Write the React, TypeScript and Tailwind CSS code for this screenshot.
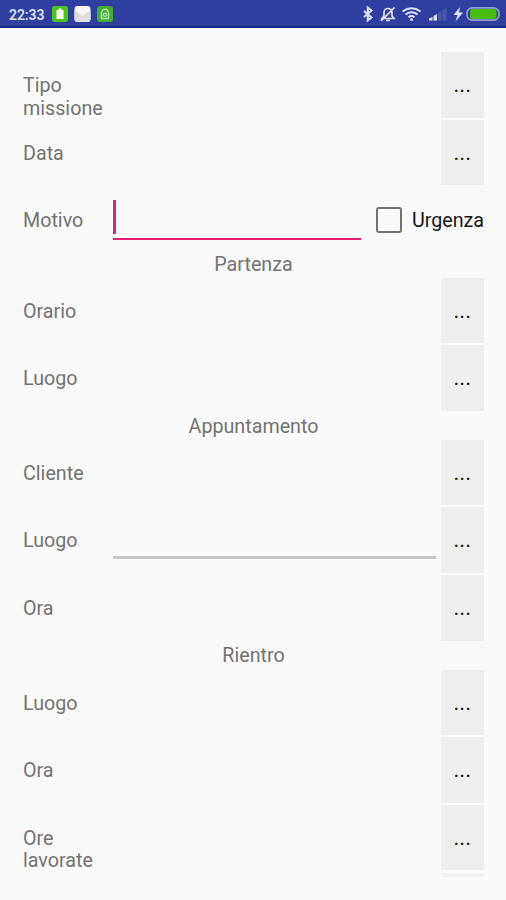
import { useState } from 'react'

interface FieldRow {
  label: string
  editable?: boolean
}

const tripRows: FieldRow[] = [{ label: 'Tipo missione' }, { label: 'Data' }]
const departureRows: FieldRow[] = [{ label: 'Orario' }, { label: 'Luogo' }]
const appointmentRows: FieldRow[] = [{ label: 'Cliente' }, { label: 'Luogo', editable: true }, { label: 'Ora' }]
const returnRows: FieldRow[] = [{ label: 'Luogo' }, { label: 'Ora' }, { label: 'Ore lavorate' }]

function StatusBar() {
  return (
    <header className="flex h-[28px] items-center justify-between border-b-2 border-[#1c2a8c] bg-[#303f9f] pl-[9px] pr-[6px] pt-[2px] text-[#dfe3fa]">
      <div className="flex items-center">
        <span className="w-[43px] pt-px text-[14px] font-semibold leading-none tracking-[-0.1px]">22:33</span>
        <svg width="62" height="18" viewBox="0 0 62 18">
          <rect x="0" y="1" width="16" height="16" rx="3" fill="#4cc417" />
          <path d="M4.500 5h2V3.500h3V5h2v9h-7z" fill="#fff" />
          <rect x="22.500" y="1" width="16" height="16" rx="3" fill="#f6f6f6" />
          <path d="M22.500 5l8 6 8-6v9a3 3 0 0 1-3 3h-10a3 3 0 0 1-3-3z" fill="#e0e0e0" />
          <rect x="45" y="1" width="16" height="16" rx="3" fill="#42ad32" />
          <path d="M51 4.500h4l1.500 3v6h-7v-6z" fill="none" stroke="#b5e5a8" strokeWidth="1.400" strokeLinejoin="round" />
          <circle cx="53" cy="9.800" r="1.600" fill="none" stroke="#b5e5a8" strokeWidth="1.200" />
        </svg>
      </div>
      <svg width="140" height="20" viewBox="0 0 140 20" fill="none" stroke="currentColor">
        {/* bluetooth */}
        <path d="M4 7l7.500 6.500-3.700 3V3.500l3.700 3L4 13" strokeWidth="2" />
        {/* muted bell */}
        <path d="M22 14.500h12l-2-2.500V8.500a4 4 0 0 0-8 0V12zM26 16.500h4M34.500 3.500L21 17" strokeWidth="1.700" />
        {/* wifi */}
        <path d="M42.500 7.500q9-6.500 18 0M45.500 10.500q6-4.500 12 0M48.500 13.200q3-2.400 6 0" strokeWidth="2" />
        <circle cx="51.500" cy="15.500" r="1.500" fill="currentColor" stroke="none" />
        {/* signal bars */}
        <g stroke="none" fill="currentColor">
          <path d="M69 16.500v-2l3.500-1.500v3.500zM73.500 16.500v-4.500l3.500-2v6.500z" />
          <path d="M78 16.500V9l3.500-2.300v9.800zM82.500 16.500V6.200l4-2.700v13z" opacity="0.15" />
          <path d="M100 3l-6.500 8h4L95.500 17.500l7.500-9h-4z" />
        </g>
        <rect x="107" y="3.800" width="32" height="12.400" rx="5.500" stroke="#8e9bd5" strokeWidth="1.700" />
        <rect x="110" y="5" width="26.500" height="10" rx="2.500" fill="#48bd0c" stroke="none" />
      </svg>
    </header>
  )
}

function PickerButton() {
  return (
    <button className="mb-[2px] w-[43px] shrink-0 bg-[#eeeeee] pt-[3px] text-[19px] font-medium tracking-[0.6px] text-[#252525]">
      ...
    </button>
  )
}

function FormRow({ label, editable }: FieldRow) {
  return (
    <div className="flex h-[67.600px]">
      <div className="w-[90px] shrink-0 pt-[23px]">{label}</div>
      <div className="mr-[5px] grow">
        {editable && <input className="h-[51.500px] w-full border-b-[3px] border-[#c6c6c6] bg-transparent outline-none" />}
      </div>
      <PickerButton />
    </div>
  )
}

function FormSection({ rows }: { rows: FieldRow[] }) {
  return (
    <section>
      {rows.map((row, i) => (
        <FormRow key={i} {...row} />
      ))}
    </section>
  )
}

export default function App() {
  const [urgent, setUrgent] = useState(false)

  return (
    <div className="flex h-[900px] w-[506px] flex-col overflow-hidden bg-[#fafafa] font-['Roboto',sans-serif] text-[#737373]">
      <StatusBar />
      <main className="pl-[23px] pr-[22px] pt-[24px] text-[19.700px] leading-[22.500px]">
        <FormSection rows={tripRows} />

        <div className="flex h-[67.600px]">
          <div className="w-[90px] shrink-0 pt-[23px]">Motivo</div>
          <div className="h-[53px] w-[248px] border-b-2 border-[#e91e70] pt-[13px]">
            <div className="h-[34px] w-[3px] bg-[#e91e70]" />
          </div>
          <label className="ml-[15px] flex h-[66px] items-center whitespace-nowrap text-[#161616]">
            <input
              type="checkbox"
              checked={urgent}
              onChange={e => setUrgent(e.target.checked)}
              className="mr-[10px] size-[26px] shrink-0 appearance-none rounded-[3px] border-[2.500px] border-[#737373] checked:bg-[#e91e70]"
            />
            <span className="pt-[2px]">Urgenza</span>
          </label>
        </div>

        <h2 className="h-[22.800px] text-center">
          <span className="relative -top-px">Partenza</span>
        </h2>
        <FormSection rows={departureRows} />

        <h2 className="h-[27px] pt-[3px] text-center">Appuntamento</h2>
        <FormSection rows={appointmentRows} />

        <h2 className="h-[27px] pt-[2px] text-center">Rientro</h2>
        <FormSection rows={returnRows} />

        <div className="ml-auto mt-px h-[4px] w-[43px] bg-[#f0f0f0]" />
      </main>
    </div>
  )
}
